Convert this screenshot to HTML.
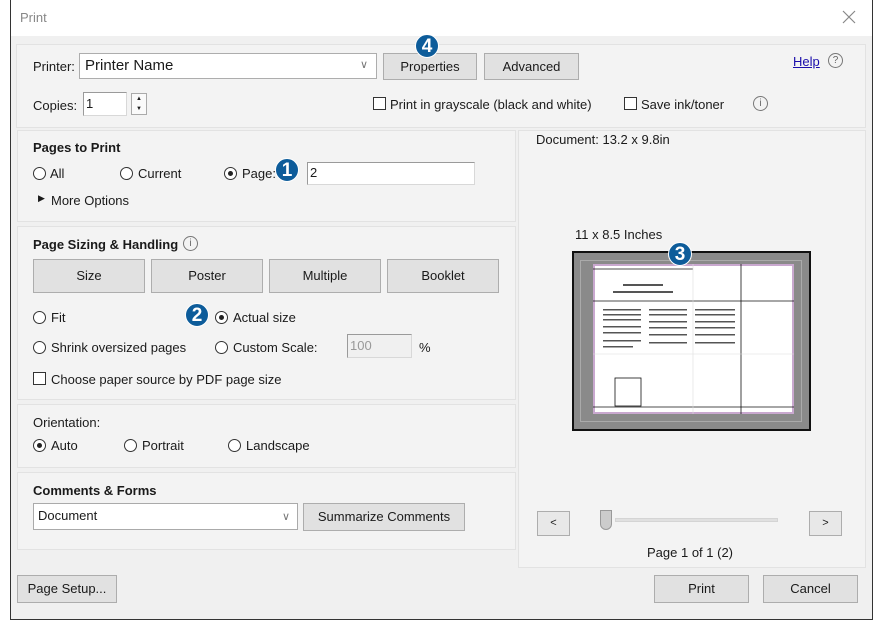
<!DOCTYPE html>
<html><head><style>
*{box-sizing:border-box;margin:0;padding:0}
body{width:882px;height:623px;background:#fff;font-family:"Liberation Sans",sans-serif;font-size:13px;color:#1a1a1a;position:relative;overflow:hidden}
.a{position:absolute}
.dlg{left:10px;top:0;width:863px;height:620px;border:1px solid #333;border-top:none;background:#f0f0f0}
.tb{left:11px;top:0;width:861px;height:36px;background:#fff}
.pn{position:absolute;background:#f3f3f3;border:1px solid #e2e2e2}
.btn{position:absolute;background:#e1e1e1;border:1px solid #adadad;text-align:center;font-size:13px}
.in{position:absolute;background:#fff;border:1px solid #7a7a7a;border-color:#9a9a9a #d8d8d8 #d8d8d8 #9a9a9a}
.r{position:absolute;width:13px;height:13px;border:1px solid #333;border-radius:50%;background:#fff}
.r.on::after{content:"";position:absolute;left:3px;top:3px;width:5px;height:5px;border-radius:50%;background:#222}
.cb{position:absolute;width:13px;height:13px;border:1px solid #333;background:#fff}
.t{position:absolute;white-space:nowrap}
.b{font-weight:bold}
.bd{position:absolute;width:24px;height:24px;border-radius:50%;background:#0d5c9a;color:#fff;font-weight:bold;font-size:19px;text-align:center;line-height:24px;border:1px solid #fff}
.ic{position:absolute;width:15px;height:15px;border:1px solid #777;border-radius:50%;font-size:10px;text-align:center;line-height:13px;color:#666}
</style></head><body>
<div class="a dlg"></div>
<div class="a tb"></div>
<div class="t" style="left:20px;top:10px;color:#888;font-size:13px">Print</div>
<svg class="a" style="left:842px;top:10px" width="14" height="14"><path d="M1 1L13 13M13 1L1 13" stroke="#888" stroke-width="1.2"/></svg>

<div class="pn" style="left:16px;top:44px;width:850px;height:84px"></div>
<div class="t" style="left:33px;top:59px">Printer:</div>
<div class="in" style="left:79px;top:53px;width:298px;height:26px;border:1px solid #adadad"></div>
<div class="t" style="left:85px;top:57px;font-size:15px">Printer Name</div>
<div class="t" style="left:360px;top:58px;color:#777;font-size:11px">∨</div>
<div class="btn" style="left:383px;top:53px;width:94px;height:27px;line-height:25px">Properties</div>
<div class="btn" style="left:484px;top:53px;width:95px;height:27px;line-height:25px">Advanced</div>
<div class="bd" style="left:415px;top:34px">4</div>
<div class="t" style="left:793px;top:54px;color:#1a0dab;text-decoration:underline">Help</div>
<div class="ic" style="left:828px;top:53px">?</div>
<div class="t" style="left:33px;top:98px">Copies:</div>
<div class="in" style="left:83px;top:92px;width:44px;height:24px"></div>
<div class="t" style="left:86px;top:96px">1</div>
<div class="a" style="left:131px;top:93px;width:16px;height:22px;border:1px solid #aaa;background:#fafafa;font-size:6px;line-height:10px;text-align:center">▲<br>▼</div>
<div class="cb" style="left:373px;top:97px"></div>
<div class="t" style="left:390px;top:97px">Print in grayscale (black and white)</div>
<div class="cb" style="left:624px;top:97px"></div>
<div class="t" style="left:641px;top:97px">Save ink/toner</div>
<div class="ic" style="left:753px;top:96px">i</div>

<div class="pn" style="left:17px;top:130px;width:499px;height:92px"></div>
<div class="t b" style="left:33px;top:140px">Pages to Print</div>
<div class="r" style="left:33px;top:167px"></div><div class="t" style="left:50px;top:166px">All</div>
<div class="r" style="left:120px;top:167px"></div><div class="t" style="left:138px;top:166px">Current</div>
<div class="r on" style="left:224px;top:167px"></div><div class="t" style="left:242px;top:166px">Page:</div>
<div class="bd" style="left:275px;top:158px">1</div>
<div class="in" style="left:307px;top:162px;width:168px;height:23px"></div>
<div class="t" style="left:310px;top:165px">2</div>
<div class="t" style="left:38px;top:193px;font-size:9px">▶</div>
<div class="t" style="left:51px;top:193px">More Options</div>

<div class="pn" style="left:17px;top:226px;width:499px;height:174px"></div>
<div class="t b" style="left:33px;top:237px">Page Sizing &amp; Handling</div>
<div class="ic" style="left:183px;top:236px">i</div>
<div class="btn" style="left:33px;top:259px;width:112px;height:34px;line-height:32px">Size</div>
<div class="btn" style="left:151px;top:259px;width:112px;height:34px;line-height:32px">Poster</div>
<div class="btn" style="left:269px;top:259px;width:112px;height:34px;line-height:32px">Multiple</div>
<div class="btn" style="left:387px;top:259px;width:112px;height:34px;line-height:32px">Booklet</div>
<div class="r" style="left:33px;top:311px"></div><div class="t" style="left:51px;top:310px">Fit</div>
<div class="bd" style="left:185px;top:303px">2</div>
<div class="r on" style="left:215px;top:311px"></div><div class="t" style="left:233px;top:310px">Actual size</div>
<div class="r" style="left:33px;top:341px"></div><div class="t" style="left:51px;top:340px">Shrink oversized pages</div>
<div class="r" style="left:215px;top:341px"></div><div class="t" style="left:233px;top:340px">Custom Scale:</div>
<div class="in" style="left:347px;top:334px;width:65px;height:24px;background:#f0f0f0"></div>
<div class="t" style="left:350px;top:338px;color:#999">100</div>
<div class="t" style="left:419px;top:340px">%</div>
<div class="cb" style="left:33px;top:372px"></div><div class="t" style="left:51px;top:372px">Choose paper source by PDF page size</div>

<div class="pn" style="left:17px;top:404px;width:499px;height:64px"></div>
<div class="t" style="left:33px;top:415px">Orientation:</div>
<div class="r on" style="left:33px;top:439px"></div><div class="t" style="left:51px;top:438px">Auto</div>
<div class="r" style="left:124px;top:439px"></div><div class="t" style="left:142px;top:438px">Portrait</div>
<div class="r" style="left:228px;top:439px"></div><div class="t" style="left:246px;top:438px">Landscape</div>

<div class="pn" style="left:17px;top:472px;width:499px;height:78px"></div>
<div class="t b" style="left:33px;top:483px">Comments &amp; Forms</div>
<div class="in" style="left:33px;top:503px;width:265px;height:27px;border:1px solid #aaa"></div>
<div class="t" style="left:38px;top:508px">Document</div>
<div class="t" style="left:282px;top:510px;color:#777;font-size:11px">∨</div>
<div class="btn" style="left:303px;top:503px;width:162px;height:28px;line-height:26px">Summarize Comments</div>

<div class="pn" style="left:518px;top:130px;width:348px;height:438px"></div>
<div class="t" style="left:536px;top:132px">Document: 13.2 x 9.8in</div>
<div class="t" style="left:575px;top:227px">11 x 8.5 Inches</div>
<div class="a" style="left:572px;top:251px;width:239px;height:180px;background:#8a8a8a;border:2px solid #111"></div>
<div class="a" style="left:580px;top:260px;width:222px;height:162px;border:1px solid #aaa"></div>
<div class="a" style="left:593px;top:264px;width:201px;height:150px;background:#fff;border:2px solid #c9a8cf"></div>
<svg class="a" style="left:593px;top:264px" width="201" height="150">
<g stroke="#111" stroke-width="0.8" fill="none">
<line x1="0" y1="37" x2="201" y2="37"/><line x1="148" y1="0" x2="148" y2="150"/>
<line x1="0" y1="5" x2="100" y2="5"/><line x1="0" y1="143" x2="201" y2="143"/>
</g>
<g stroke="#ddd" stroke-width="0.6"><line x1="100" y1="0" x2="100" y2="150"/><line x1="0" y1="90" x2="201" y2="90"/></g>
<g fill="#555">
<rect x="10" y="45" width="38" height="1.5"/><rect x="10" y="50" width="38" height="1.5"/><rect x="10" y="55" width="38" height="1.5"/><rect x="10" y="62" width="38" height="1.5"/><rect x="10" y="68" width="38" height="1.5"/><rect x="10" y="76" width="38" height="1.5"/><rect x="10" y="82" width="30" height="1.5"/>
<rect x="56" y="45" width="38" height="1.5"/><rect x="56" y="50" width="38" height="1.5"/><rect x="56" y="57" width="38" height="1.5"/><rect x="56" y="63" width="38" height="1.5"/><rect x="56" y="70" width="38" height="1.5"/><rect x="56" y="78" width="38" height="1.5"/>
<rect x="102" y="45" width="40" height="1.5"/><rect x="102" y="50" width="40" height="1.5"/><rect x="102" y="57" width="40" height="1.5"/><rect x="102" y="63" width="40" height="1.5"/><rect x="102" y="70" width="40" height="1.5"/><rect x="102" y="78" width="40" height="1.5"/>
<rect x="30" y="20" width="40" height="2"/><rect x="20" y="27" width="60" height="2"/>
</g>
<rect x="22" y="114" width="26" height="28" fill="#fff" stroke="#111" stroke-width="0.8"/>
</svg>
<div class="bd" style="left:668px;top:242px">3</div>

<div class="btn" style="left:537px;top:511px;width:33px;height:25px;line-height:23px;font-size:11px;background:#e8e8e8">&lt;</div>
<div class="a" style="left:615px;top:518px;width:163px;height:4px;background:#e0e0e0;border:1px solid #d4d4d4"></div>
<div class="a" style="left:600px;top:510px;width:12px;height:20px;background:#ccc;border:1px solid #999;border-radius:0 0 6px 6px"></div>
<div class="btn" style="left:809px;top:511px;width:33px;height:25px;line-height:23px;font-size:11px;background:#e8e8e8">&gt;</div>
<div class="t" style="left:647px;top:545px">Page 1 of 1 (2)</div>

<div class="btn" style="left:17px;top:575px;width:100px;height:28px;line-height:26px">Page Setup...</div>
<div class="btn" style="left:654px;top:575px;width:95px;height:28px;line-height:26px">Print</div>
<div class="btn" style="left:763px;top:575px;width:95px;height:28px;line-height:26px">Cancel</div>
</body></html>
